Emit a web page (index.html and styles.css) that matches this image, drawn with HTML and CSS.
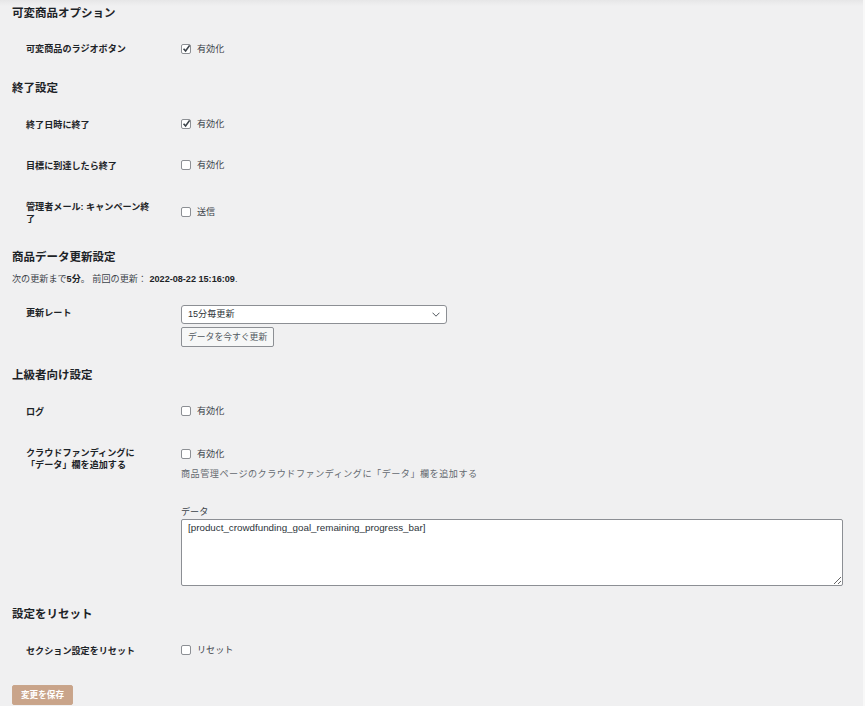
FILE: index.html
```html
<!DOCTYPE html>
<html lang="ja">
<head>
<meta charset="utf-8">
<title>設定</title>
<link rel="stylesheet" href="styles.css">
</head>
<body>
<div class="page">
  <h2 class="section-title">可変商品オプション</h2>
  <div class="form-table first">
    <div class="row">
      <div class="th">可変商品のラジオボタン</div>
      <div class="td"><label class="cb-label"><span class="cb"><svg class="tick" viewBox="0 0 12 12"><path d="M2.8 6.3 L5 8.7 L9.4 2.6" /></svg></span>有効化</label></div>
    </div>
  </div>

  <h2 class="section-title">終了設定</h2>
  <div class="form-table">
    <div class="row">
      <div class="th">終了日時に終了</div>
      <div class="td"><label class="cb-label"><span class="cb"><svg class="tick" viewBox="0 0 12 12"><path d="M2.8 6.3 L5 8.7 L9.4 2.6" /></svg></span>有効化</label></div>
    </div>
    <div class="row">
      <div class="th">目標に到達したら終了</div>
      <div class="td"><label class="cb-label"><span class="cb"></span>有効化</label></div>
    </div>
    <div class="row">
      <div class="th">管理者メール: キャンペーン終了</div>
      <div class="td"><label class="cb-label"><span class="cb"></span>送信</label></div>
    </div>
  </div>

  <h2 class="section-title">商品データ更新設定</h2>
  <p class="status">次の更新まで<strong>5分</strong>。 前回の更新： <strong>2022-08-22 15:16:09</strong>.</p>
  <div class="form-table">
    <div class="row">
      <div class="th">更新レート</div>
      <div class="td td-select">
        <div class="select"><span>15分毎更新</span><svg class="chev" viewBox="0 0 8 5"><path d="M0.5 0.7 L4 4.2 L7.5 0.7" /></svg></div>
        <button class="btn" type="button">データを今すぐ更新</button>
      </div>
    </div>
  </div>

  <h2 class="section-title">上級者向け設定</h2>
  <div class="form-table">
    <div class="row">
      <div class="th">ログ</div>
      <div class="td"><label class="cb-label"><span class="cb"></span>有効化</label></div>
    </div>
    <div class="row">
      <div class="th">クラウドファンディングに「データ」欄を追加する</div>
      <div class="td td-tall">
        <label class="cb-label"><span class="cb"></span>有効化</label>
        <p class="description">商品管理ページのクラウドファンディングに「データ」欄を追加する</p>
        <div class="field-label">データ</div>
        <textarea class="data-area" readonly>[product_crowdfunding_goal_remaining_progress_bar]</textarea>
      </div>
    </div>
  </div>

  <h2 class="section-title">設定をリセット</h2>
  <div class="form-table">
    <div class="row">
      <div class="th">セクション設定をリセット</div>
      <div class="td"><label class="cb-label"><span class="cb"></span>リセット</label></div>
    </div>
  </div>

  <div class="submit"><button class="btn-primary" type="button">変更を保存</button></div>
</div>
</body>
</html>
```

FILE: styles.css
```css
html, body {
  margin: 0;
  padding: 0;
}
body {
  background:
    linear-gradient(to left, #f8f8f8 0, #f8f8f8 2px, transparent 2px),
    linear-gradient(to bottom, #e6e6e7 0, #f0f0f1 6px);
  background-color: #f0f0f1;
  font-family: "Liberation Sans", "Noto Sans CJK JP", sans-serif;
  font-size: 9.1px;
  line-height: 12.5px;
  color: #3c434a;
  min-height: 706px;
}
.page {
  padding: 7px 15px 0 12px;
}
.section-title {
  font-size: 11.5px;
  line-height: 12px;
  font-weight: 700;
  color: #1d2327;
  margin: 12px 0 10px;
}
.section-title:first-child {
  margin-top: 0;
}
.form-table {
  margin-left: 14px;
}
.row {
  display: grid;
  grid-template-columns: 148px 1fr;
}
.th {
  align-self: start;
  padding: 15.5px 22px 13.5px 0;
  line-height: 12px;
  font-weight: 700;
  color: #1d2327;
}
.form-table.first .th {
  padding-top: 14px;
  padding-bottom: 14.5px;
}
.td {
  align-self: center;
  padding: 10px 0 10px 7px;
}
.cb-label {
  display: flex;
  align-items: center;
  gap: 6px;
  color: #3c434a;
}
.cb {
  box-sizing: border-box;
  width: 10px;
  height: 10px;
  border: 1px solid #8c8f94;
  border-radius: 2px;
  background: #fff;
  position: relative;
  flex: none;
}
.tick {
  position: absolute;
  left: -1px;
  top: -2px;
  width: 11px;
  height: 11px;
  fill: none;
  stroke: #3c434a;
  stroke-width: 1.8;
}
.status {
  margin: 0 0 6px;
}
.status strong {
  font-weight: 700;
  color: #1d2327;
}
.td-select {
  align-self: start;
  padding: 14px 0 9.5px 7px;
  display: flex;
  flex-direction: column;
  align-items: flex-start;
  gap: 3px;
}
.select {
  box-sizing: border-box;
  width: 266px;
  height: 19px;
  border: 1px solid #8c8f94;
  border-radius: 3px;
  background: #fff;
  display: flex;
  align-items: center;
  justify-content: space-between;
  padding: 0 6px 0 6px;
  color: #2c3338;
}
.chev {
  width: 8px;
  height: 5px;
  fill: none;
  stroke: #50575e;
  stroke-width: 1;
}
.btn {
  box-sizing: border-box;
  height: 20px;
  padding: 0 6px;
  border: 1px solid #8c8f94;
  border-radius: 2px;
  background: #f6f7f7;
  color: #50575e;
  font-family: inherit;
  font-size: 8.8px;
  line-height: 18px;
  cursor: pointer;
}
.td-tall {
  align-self: start;
  padding: 16.25px 0 10px 7px;
}
.description {
  margin: 7.8px 0 0;
  color: #646970;
  letter-spacing: 0.5px;
}
.field-label {
  margin-top: 25.5px;
  color: #3c434a;
}
.data-area {
  display: block;
  box-sizing: border-box;
  width: 662px;
  height: 67px;
  margin-top: 0;
  padding: 1px 6px;
  border: 1px solid #8c8f94;
  border-radius: 2px;
  background: #fff;
  color: #2c3338;
  font-family: inherit;
  font-size: 9.8px;
  line-height: 13px;
}
.submit {
  margin-top: 14px;
}
.btn-primary {
  box-sizing: border-box;
  height: 20px;
  padding: 0 8px;
  border: 1px solid #c9a68c;
  border-radius: 2px;
  background: #c9a48a;
  color: #fff;
  font-family: inherit;
  font-size: 8.6px;
  font-weight: 700;
  line-height: 18px;
}
```
